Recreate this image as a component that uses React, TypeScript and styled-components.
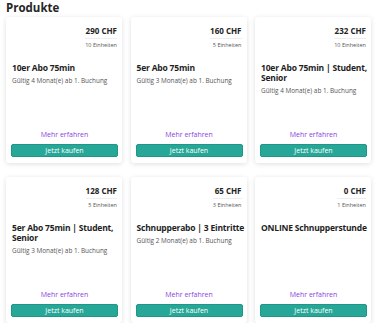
import styled, { createGlobalStyle } from 'styled-components';

const GlobalStyle = createGlobalStyle`
	body {
		margin: 0;
		background: #fff;
		font-family: 'Open Sans', 'Noto Sans', sans-serif;
		color: #222;
	}
`;

const Page = styled.div`
	padding: 0 6px;
`;
const Heading = styled.h1`
	margin: 0;
	font-size: 11.5px;
	line-height: 15px;
	font-weight: 700;
	color: #262626;
`;
const Grid = styled.div`
	display: grid;
	grid-template-columns: repeat(3, 116px);
	column-gap: 8.5px;
	row-gap: 14px;
	margin-top: 2px;
`;
const Card = styled.div`
	height: 146px;
	box-sizing: border-box;
	padding: 8px 4px 6px 5px;
	display: flex;
	flex-direction: column;
	background: #fff;
	border-radius: 3px;
	box-shadow: 0 1px 5px rgba(0, 0, 0, 0.13);
`;
const PriceBox = styled.div`
	align-self: flex-end;
	text-align: right;
	margin-right: 1px;
`;
const Price = styled.div`
	font-size: 8px;
	font-weight: 700;
	line-height: 11px;
	padding-bottom: 2px;
	border-bottom: 1px solid #eee;
`;
const Units = styled.div`
	font-size: 5.5px;
	color: #555;
	margin-top: 2px;
`;
const Title = styled.div`
	margin-top: 14px;
	margin-right: -8px;
	font-size: 8.5px;
	font-weight: 700;
	line-height: 10px;
	letter-spacing: -0.2px;
	color: #1e1e1e;
	padding-left: 1px;
`;
const Validity = styled.div`
	margin-top: 3px;
	font-size: 6.4px;
	color: #555;
	padding-left: 1px;
`;
const More = styled.div`
	margin-top: auto;
	text-align: center;
	font-size: 7px;
	color: #8b3fe0;
`;
const BuyButton = styled.button`
	margin-top: 5px;
	height: 13px;
	padding: 0;
	border: 1px solid #1f9688;
	border-radius: 2px;
	background: #27a797;
	color: #fff;
	font-family: inherit;
	font-size: 7px;
	cursor: pointer;
`;

type Product = {
	price: string;
	units: string;
	title: string;
	validity?: string;
};

const products: Product[] = [
	{ price: '290 CHF', units: '10 Einheiten', title: '10er Abo 75min', validity: 'Gültig 4 Monat(e) ab 1. Buchung' },
	{ price: '160 CHF', units: '5 Einheiten', title: '5er Abo 75min', validity: 'Gültig 3 Monat(e) ab 1. Buchung' },
	{ price: '232 CHF', units: '10 Einheiten', title: '10er Abo 75min | Student, Senior', validity: 'Gültig 4 Monat(e) ab 1. Buchung' },
	{ price: '128 CHF', units: '5 Einheiten', title: '5er Abo 75min | Student, Senior', validity: 'Gültig 3 Monat(e) ab 1. Buchung' },
	{ price: '65 CHF', units: '3 Einheiten', title: 'Schnupperabo | 3 Eintritte', validity: 'Gültig 2 Monat(e) ab 1. Buchung' },
	{ price: '0 CHF', units: '1 Einheiten', title: 'ONLINE Schnupperstunde' },
];

const App = () => {
	return (
		<Page>
			<GlobalStyle />
			<Heading>Produkte</Heading>
			<Grid>
				{products.map((p) => (
					<Card key={p.title}>
						<PriceBox>
							<Price>{p.price}</Price>
							<Units>{p.units}</Units>
						</PriceBox>
						<Title>{p.title}</Title>
						{p.validity && <Validity>{p.validity}</Validity>}
						<More>Mehr erfahren</More>
						<BuyButton>Jetzt kaufen</BuyButton>
					</Card>
				))}
			</Grid>
		</Page>
	);
};

export default App;
